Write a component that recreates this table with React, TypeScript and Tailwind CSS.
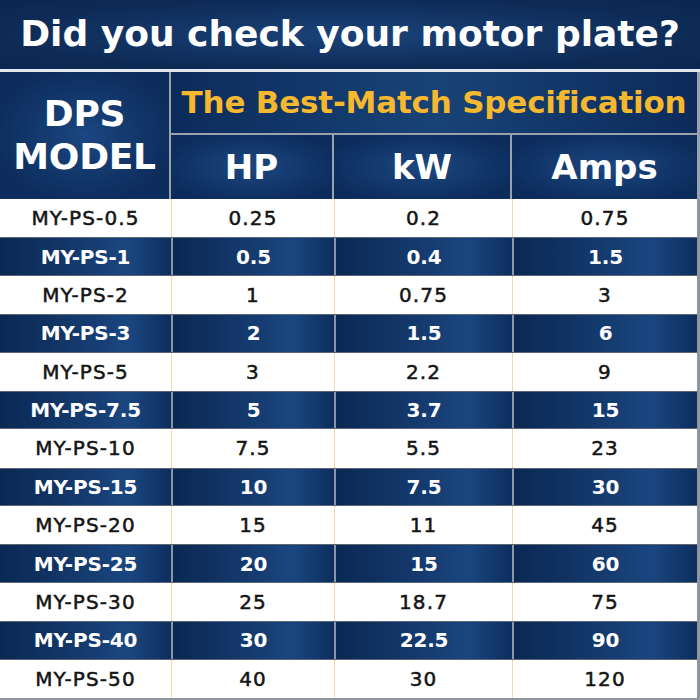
import React from "react";

const rows: [string, string, string, string][] = [
  ["MY-PS-0.5", "0.25", "0.2", "0.75"],
  ["MY-PS-1", "0.5", "0.4", "1.5"],
  ["MY-PS-2", "1", "0.75", "3"],
  ["MY-PS-3", "2", "1.5", "6"],
  ["MY-PS-5", "3", "2.2", "9"],
  ["MY-PS-7.5", "5", "3.7", "15"],
  ["MY-PS-10", "7.5", "5.5", "23"],
  ["MY-PS-15", "10", "7.5", "30"],
  ["MY-PS-20", "15", "11", "45"],
  ["MY-PS-25", "20", "15", "60"],
  ["MY-PS-30", "25", "18.7", "75"],
  ["MY-PS-40", "30", "22.5", "90"],
  ["MY-PS-50", "40", "30", "120"],
];

const cols = "grid grid-cols-[171px_163px_178px_185px]";

export default function App() {
  return (
    <div
      className="w-[700px] h-[700px] flex flex-col bg-[#0d2c5a] overflow-hidden"
      style={{ fontFamily: '"DejaVu Sans", "Open Sans", sans-serif' }}
    >
      <div className="h-[69px] flex items-center justify-center bg-[radial-gradient(ellipse_at_center,#1a4379_0%,#0e2b57_70%,#0b2650_100%)]">
        <span className="text-white font-bold text-[36px] tracking-[0px] leading-none pb-[2px]">
          Did you check your motor plate?
        </span>
      </div>
      <div className="h-[3px] bg-[#e4e7ec]" />
      <div className="flex h-[127px] pr-[3px] bg-[#9aa3ad]">
        <div className="w-[171px] flex flex-col items-center justify-center bg-[radial-gradient(ellipse_at_center,#1b4680_0%,#0d2d5d_75%)] text-white font-bold text-[36px] leading-[43px] text-center tracking-[-0.3px] pb-[2px]">
          <span>DPS</span>
          <span>MODEL</span>
        </div>
        <div className="w-[2px] bg-[#9aa3ad]" />
        <div className="flex-1 flex flex-col">
          <div className="h-[61px] flex items-center justify-center bg-[linear-gradient(90deg,#0c2b5b,#184377_50%,#0c2b5b)]">
            <span className="text-[#f5b82e] font-bold text-[31px] leading-none tracking-[-0.2px]">
              The Best-Match Specification
            </span>
          </div>
          <div className="h-[2px] bg-[#9aa3ad]" />
          <div className="flex-1 grid grid-cols-[161px_2px_176px_2px_185px]">
            <div className="flex items-center justify-center bg-[radial-gradient(ellipse_at_center,#1c4781_0%,#0c2c5c_80%)] text-white font-bold text-[34px]">HP</div>
            <div className="bg-[#9aa3ad]" />
            <div className="flex items-center justify-center bg-[radial-gradient(ellipse_at_center,#1c4781_0%,#0c2c5c_80%)] text-white font-bold text-[34px]">kW</div>
            <div className="bg-[#9aa3ad]" />
            <div className="flex items-center justify-center bg-[radial-gradient(ellipse_at_center,#1c4781_0%,#0c2c5c_80%)] text-white font-bold text-[34px]">Amps</div>
          </div>
        </div>
      </div>
      <div className="flex-1 grid grid-rows-[repeat(13,1fr)] bg-[#8e969f] pr-[3px] pb-[2px]">
        {rows.map((r, i) => {
          const dark = i % 2 === 1;
          return (
            <div
              key={r[0]}
              className={cols + (dark ? " border-y border-[#5b6672]" : "")}
            >
              {r.map((c, j) => (
                <div
                  key={j}
                  className={
                    "flex items-center justify-center leading-none " +
                    (j > 0 ? (dark ? "border-l-2 border-[#8c96a2] " : "border-l border-[#f1dca5] ") : "") +
                    (dark
                      ? "bg-[linear-gradient(90deg,#0a2853_0%,#14396c_45%,#1a4680_75%,#0d2e5e_100%)] text-white font-bold text-[20px] tracking-[-0.2px]"
                      : "bg-white text-[#141414] font-normal text-[20px] tracking-[1.1px] [-webkit-text-stroke:0.5px_#141414]")
                  }
                >
                  {c}
                </div>
              ))}
            </div>
          );
        })}
      </div>
    </div>
  );
}
